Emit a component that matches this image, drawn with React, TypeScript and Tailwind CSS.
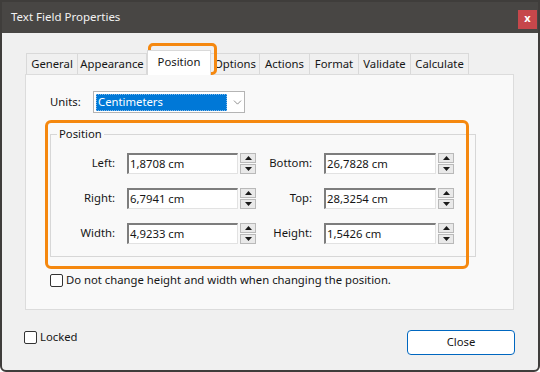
import { ChevronDown } from "lucide-react";

const tabs = [
  { name: "General", w: "w-[52px]" },
  { name: "Appearance", w: "w-[70px]" },
  { name: "Position", w: "w-[64px]", active: true },
  { name: "Options", w: "w-[50px]" },
  { name: "Actions", w: "w-[51px]" },
  { name: "Format", w: "w-[50px]" },
  { name: "Validate", w: "w-[53px]" },
  { name: "Calculate", w: "w-[59px]" },
];

function Spinner() {
  return (
    <div className="ml-[2px] flex h-[21px] w-[16px] flex-col gap-[1px]">
      <div className="flex h-[10px] items-center justify-center border border-[#b9b9b9] bg-[#e9e9e9]">
        <svg width="7" height="4" viewBox="0 0 7 4">
          <path d="M0 4 L3.5 0 L7 4 Z" fill="#1a1a1a" />
        </svg>
      </div>
      <div className="flex h-[10px] items-center justify-center border border-[#b9b9b9] bg-[#e9e9e9]">
        <svg width="7" height="4" viewBox="0 0 7 4">
          <path d="M0 0 L3.5 4 L7 0 Z" fill="#1a1a1a" />
        </svg>
      </div>
    </div>
  );
}

function Field({ value, w }: { value: string; w: string }) {
  return (
    <div
      className={`ml-[12px] flex h-[21px] ${w} items-center border-t-2 border-l-2 border-r border-b border-t-[#7d7d7d] border-l-[#7d7d7d] border-r-[#e2e2e2] border-b-[#e2e2e2] bg-white pl-[1px] leading-none`}
    >
      {value}
    </div>
  );
}

function Row(props: { l1: string; v1: string; l2: string; v2: string }) {
  return (
    <div className="flex items-center">
      <span className="w-[64px] text-right">{props.l1}</span>
      <Field value={props.v1} w="w-[111px]" />
      <Spinner />
      <span className="w-[56px] text-right">{props.l2}</span>
      <Field value={props.v2} w="w-[112px]" />
      <Spinner />
    </div>
  );
}

function Check({ label }: { label: string }) {
  return (
    <div className="flex items-center gap-[3px]">
      <div className="h-[13px] w-[13px] rounded-[2px] border border-[#333] bg-white" />
      <span>{label}</span>
    </div>
  );
}

export default function App() {
  return (
    <div
      className="relative flex h-[372px] w-[540px] flex-col overflow-hidden rounded-b-[6px] border-2 border-[#3f3d3b] bg-[#f0f0f0] text-[11.3px] text-[#161616]"
      style={{ fontFamily: '"Segoe UI", "Noto Sans", sans-serif' }}
    >
      {/* title bar */}
      <div className="flex h-[31px] shrink-0 items-start justify-between bg-[#484644]">
        <span className="mt-[6px] pl-[9px] text-[11.5px] text-[#f2f2f2]">Text Field Properties</span>
        <div className="mr-[1px] mt-[8px] flex h-[19px] w-[19px] items-center justify-center bg-[#c6474b] pb-[2px] text-[11px] font-bold text-white">
          x
        </div>
      </div>

      {/* tabs */}
      <div className="ml-[24px] mt-[18px] flex h-[23px] items-end">
        {tabs.map((t) =>
          t.active ? (
            <div
              key={t.name}
              className={`${t.w} relative z-10 -mb-[1px] flex h-[25px] items-start justify-center border border-b-0 border-[#d9d9d9] bg-white pt-[3px]`}
            >
              {t.name}
            </div>
          ) : (
            <div
              key={t.name}
              className={`${t.w} -ml-[1px] flex h-[21px] items-center justify-center border border-b-0 border-[#d9d9d9] bg-[#f0f0f0] first:ml-0`}
            >
              {t.name}
            </div>
          )
        )}
      </div>

      {/* panel */}
      <div className="ml-[23px] flex h-[236px] w-[489px] flex-col border border-[#dcdcdc] bg-[#f9f9f9]">
        <div className="ml-[24px] mt-[16px] flex h-[22px] items-center">
          <span className="w-[43px]">Units:</span>
          <div className="flex h-[22px] w-[152px] items-center border border-[#b4b4b4] bg-white pl-[2px]">
            <div className="flex h-[17px] w-[131px] items-center border border-dotted border-[#7fb8ea] bg-[#0078d7] pl-[1px] text-white">
              Centimeters
            </div>
            <ChevronDown size={13} strokeWidth={1.2} className="ml-[4px] text-[#555]" />
          </div>
        </div>

        <div className="relative ml-[24px] mt-[21px] h-[123px] w-[426px] border border-[#d7d7d7] pt-[18px]">
          <span className="absolute -top-[9px] left-[6px] bg-[#f9f9f9] px-[2px]">Position</span>
          <div className="flex flex-col gap-[14px]">
            <Row l1="Left:" v1="1,8708 cm" l2="Bottom:" v2="26,7828 cm" />
            <Row l1="Right:" v1="6,7941 cm" l2="Top:" v2="28,3254 cm" />
            <Row l1="Width:" v1="4,9233 cm" l2="Height:" v2="1,5426 cm" />
          </div>
        </div>

        <div className="ml-[24px] mt-[15px]">
          <Check label="Do not change height and width when changing the position." />
        </div>
      </div>

      {/* footer */}
      <div className="mt-[20px] flex items-start justify-between pl-[22px] pr-[23px]">
        <div className="-mt-[1px]">
          <Check label="Locked" />
        </div>
        <div className="flex h-[25px] w-[108px] items-center justify-center rounded-[4px] border border-[#0067c0] bg-white">
          Close
        </div>
      </div>

      {/* orange highlight annotations */}
      <div className="pointer-events-none absolute left-[146px] top-[41px] h-[32px] w-[69px] rounded-[5px] border-[3px] border-[#f5880f]" />
      <div className="pointer-events-none absolute left-[43px] top-[118px] h-[149px] w-[424px] rounded-[6px] border-[3px] border-[#f5880f]" />
    </div>
  );
}
